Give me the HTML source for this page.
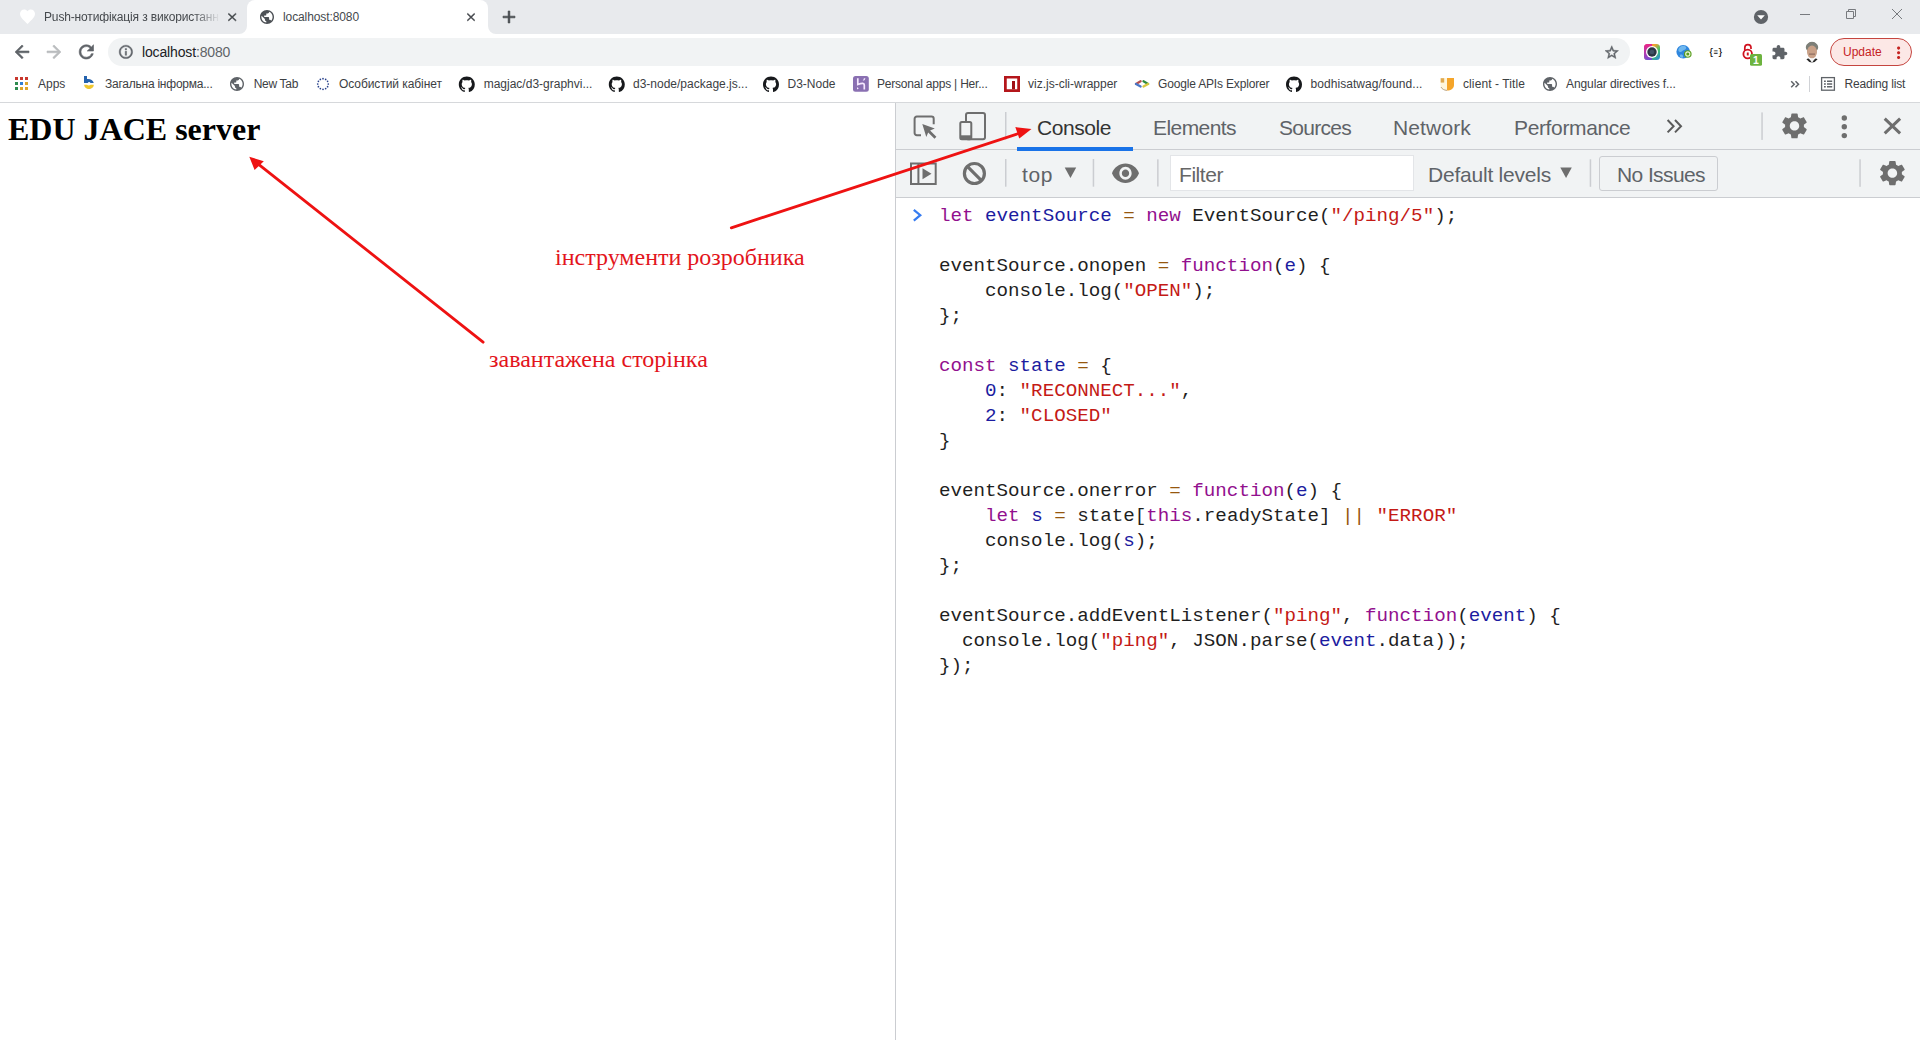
<!DOCTYPE html>
<html lang="uk">
<head>
<meta charset="utf-8">
<title>localhost:8080</title>
<style>
*{box-sizing:border-box;margin:0;padding:0}
html,body{width:1920px;height:1040px;overflow:hidden;background:#fff}
body{position:relative;font-family:"Liberation Sans",sans-serif;color:#202124}
.abs{position:absolute}
.t{position:absolute;white-space:nowrap;line-height:1}
/* ---------- browser chrome ---------- */
#tabstrip{left:0;top:0;width:1920px;height:34px;background:#e8eaed}
#activetab{left:247px;top:0;width:241px;height:34px;background:#fff;border-radius:8px 8px 0 0}
#toolbar{left:0;top:34px;width:1920px;height:36px;background:#fff}
#omni{left:108px;top:38px;width:1522px;height:28px;border-radius:14px;background:#f1f3f4}
#bookmarks{left:0;top:70px;width:1920px;height:32px;background:#fff}
#chromeborder{left:0;top:102px;width:1920px;height:1px;background:#d6d8db}
.tabtxt{font-size:12px;color:#45494d;top:11px}
.bm{font-size:12px;color:#3c4043;top:78px}
/* ---------- page ---------- */
#page{left:0;top:103px;width:895px;height:937px;background:#fff}
h1{position:absolute;left:8px;top:111px;font-family:"Liberation Serif",serif;font-weight:bold;font-size:32px;line-height:37px;color:#000;white-space:nowrap}
.note{font-family:"Liberation Serif",serif;color:#e3151c;font-size:24px}
/* ---------- devtools ---------- */
#dtborder{left:895px;top:103px;width:1px;height:937px;background:#cbcdd1}
#dttabs{left:896px;top:103px;width:1024px;height:47px;background:#f1f3f4;border-bottom:1px solid #cbcdd1}
#dtbar{left:896px;top:150px;width:1024px;height:48px;background:#f1f3f4;border-bottom:1px solid #cbcdd1}
.dtt{font-size:21px;color:#5f6368;top:117.2px}
.dtb{font-size:21px;color:#5f6368;top:164.1px}
.vdiv{width:1px;background:#cbcdd1}
#code{left:939px;top:204px;font-family:"Liberation Mono",monospace;font-size:19.2px;line-height:25px;color:#1f1f1f;white-space:pre}
.k{color:#92108e}.v{color:#1c1ca0}.s{color:#c41a16}.o{color:#96570f}
</style>
</head>
<body>
<!-- browser chrome -->
<div class="abs" id="tabstrip"></div>
<div class="abs" id="activetab"></div>
<div class="abs" id="toolbar"></div>
<div class="abs" id="omni"></div>
<div class="abs" id="bookmarks"></div>
<div class="abs" id="chromeborder"></div>

<div class="t tabtxt" id="tab1" style="left:44px;letter-spacing:-0.15px;width:176px;overflow:hidden;-webkit-mask-image:linear-gradient(90deg,#000 150px,transparent 176px)">Push-нотифікація з використанн</div>
<div class="t tabtxt" id="tab2" style="letter-spacing:-0.1px;left:283px">localhost:8080</div>
<div class="t" id="url" style="letter-spacing:-0.15px;left:142px;top:45px;font-size:14px;color:#202124">localhost<span style="color:#5f6368">:8080</span></div>

<div class="t bm" id="bApps" style="left:38px">Apps</div>
<div class="t bm" id="b1" style="letter-spacing:-0.24px;left:105px">Загальна інформа...</div>
<div class="t bm" id="b2" style="letter-spacing:-0.3px;left:253.7px">New Tab</div>
<div class="t bm" id="b3" style="letter-spacing:-0.07px;left:339px">Особистий кабінет</div>
<div class="t bm" id="b4" style="left:483.7px">magjac/d3-graphvi...</div>
<div class="t bm" id="b5" style="left:633px">d3-node/package.js...</div>
<div class="t bm" id="b6" style="left:787.5px">D3-Node</div>
<div class="t bm" id="b7" style="letter-spacing:-0.21px;left:877px">Personal apps | Her...</div>
<div class="t bm" id="b8" style="left:1028px">viz.js-cli-wrapper</div>
<div class="t bm" id="b9" style="letter-spacing:-0.17px;left:1158px">Google APIs Explorer</div>
<div class="t bm" id="b10" style="letter-spacing:0.06px;left:1310.5px">bodhisatwag/found...</div>
<div class="t bm" id="b11" style="letter-spacing:0.1px;left:1463px">client - Title</div>
<div class="t bm" id="b12" style="letter-spacing:-0.1px;left:1566px">Angular directives f...</div>
<div class="t bm" id="b13" style="letter-spacing:-0.17px;left:1844.6px">Reading list</div>
<div class="abs" id="pill" style="left:1830px;top:38px;width:82px;height:28px;border-radius:14px;background:#fce8e6;border:1px solid #c5453f"></div>
<div class="t" id="upd" style="left:1843px;top:46px;font-size:12px;color:#c5221f">Update</div>

<!-- page -->
<div class="abs" id="page"></div>
<h1 id="h1">EDU JACE server</h1>
<div class="t note" id="note1" style="left:555px;top:245px">інструменти розробника</div>
<div class="t note" id="note2" style="left:489px;top:347px">завантажена сторінка</div>

<!-- devtools -->
<div class="abs" id="dtborder"></div>
<div class="abs" id="dttabs"></div>
<div class="abs" id="dtbar"></div>
<div class="t dtt" id="tConsole" style="letter-spacing:-0.43px;left:1037px;color:#333">Console</div>
<div class="t dtt" id="tElements" style="letter-spacing:-0.56px;left:1153px">Elements</div>
<div class="t dtt" id="tSources" style="letter-spacing:-0.7px;left:1279px">Sources</div>
<div class="t dtt" id="tNetwork" style="letter-spacing:0.14px;left:1393px">Network</div>
<div class="t dtt" id="tPerformance" style="letter-spacing:-0.36px;left:1514px">Performance</div>
<div class="abs" id="underline" style="left:1017px;top:147.3px;width:116px;height:3.5px;background:#1a73e8"></div>
<div class="t dtb" id="tTop" style="letter-spacing:0.6px;left:1022px">top</div>
<div class="abs" id="filter" style="left:1169.500px;top:154.600px;width:244px;height:36.500px;background:#fff;border:1.500px solid #e3e5e8"></div>
<div class="t dtb" id="tFilter" style="letter-spacing:-0.45px;left:1179px;color:#666">Filter</div>
<div class="t dtb" id="tLevels" style="letter-spacing:-0.22px;left:1428px">Default levels</div>
<div class="abs" id="issues" style="left:1599px;top:156px;width:119px;height:35px;border:1px solid #cbcdd1;border-radius:3px"></div>
<div class="t dtb" id="tIssues" style="letter-spacing:-0.6px;left:1617px">No Issues</div>

<pre class="abs" id="code"><span class="k">let</span> <span class="v">eventSource</span> <span class="o">=</span> <span class="k">new</span> EventSource(<span class="s">"/ping/5"</span>);

eventSource.onopen <span class="o">=</span> <span class="k">function</span>(<span class="v">e</span>) {
    console.log(<span class="s">"OPEN"</span>);
};

<span class="k">const</span> <span class="v">state</span> <span class="o">=</span> {
    <span class="v">0</span>: <span class="s">"RECONNECT..."</span>,
    <span class="v">2</span>: <span class="s">"CLOSED"</span>
}

eventSource.onerror <span class="o">=</span> <span class="k">function</span>(<span class="v">e</span>) {
    <span class="k">let</span> <span class="v">s</span> <span class="o">=</span> state[<span class="k">this</span>.readyState] <span class="o">||</span> <span class="s">"ERROR"</span>
    console.log(<span class="v">s</span>);
};

eventSource.addEventListener(<span class="s">"ping"</span>, <span class="k">function</span>(<span class="v">event</span>) {
  console.log(<span class="s">"ping"</span>, JSON.parse(<span class="v">event</span>.data));
});</pre>

<!-- overlay svg for icons and arrows -->
<svg class="abs" id="ov" style="left:0;top:0" width="1920" height="1040" viewBox="0 0 1920 1040">
<path transform="translate(18.50 7.13) scale(0.7500 0.7902)" fill="#ffffff" d="M12 21.35l-1.45-1.32C5.4 15.36 2 12.28 2 8.5 2 5.42 4.42 3 7.5 3c1.740 0 3.410.81 4.500 2.090C13.090 3.810 14.760 3 16.500 3 19.580 3 22 5.420 22 8.500c0 3.780-3.400 6.860-8.550 11.540L12 21.350z"/>
<path transform="translate(225.04 10.55) scale(0.5929 0.5500)" fill="#45494d" stroke="#45494d" stroke-width="0.7" d="M19 6.41L17.59 5 12 10.59 6.41 5 5 6.41 10.59 12 5 17.59 6.41 19 12 13.41 17.59 19 19 17.59 13.41 12z"/>
<path d="M239 34 A8 8 0 0 0 247 26 V34 Z" fill="#fff"/><path d="M496 34 A8 8 0 0 1 488 26 V34 Z" fill="#fff"/>
<path transform="translate(258.60 8.60) scale(0.7000 0.7000)" fill="#4d5156" d="M12 2C6.48 2 2 6.48 2 12s4.48 10 10 10 10-4.48 10-10S17.52 2 12 2zm-1 17.93c-3.95-.49-7-3.85-7-7.93 0-.62.08-1.21.21-1.79L9 15v1c0 1.1.9 2 2 2v1.93zm6.9-2.54c-.26-.81-1-1.39-1.9-1.39h-1v-3c0-.55-.45-1-1-1H8v-2h2c.55 0 1-.45 1-1V7h2c1.1 0 2-.9 2-2v-.41c2.93 1.19 5 4.06 5 7.41 0 2.08-.8 3.97-2.1 5.39z"/>
<path transform="translate(464.14 10.55) scale(0.5714 0.5500)" fill="#45494d" stroke="#45494d" stroke-width="0.7" d="M19 6.41L17.59 5 12 10.59 6.41 5 5 6.41 10.59 12 5 17.59 6.41 19 12 13.41 17.59 19 19 17.59 13.41 12z"/>
<path transform="translate(498.71 6.71) scale(0.8571 0.8571)" fill="#45494d" stroke="#45494d" stroke-width="0.7" d="M19 13h-6v6h-2v-6H5v-2h6V5h2v6h6v2z"/>
<circle cx="1761" cy="17" r="7.1" fill="#5f6368"/><path d="M1757.2 15.2 h7.6 l-3.8 4.2z" fill="#fff"/>
<path d="M1800 14.5h10" stroke="#777a7e" stroke-width="1" fill="none"/>
<path d="M1846.5 11.5h7v7h-7z M1848.500 11.500v-2h7v7h-2" stroke="#777a7e" stroke-width="1" fill="none"/>
<path d="M1892 9l10 10M1902 9l-10 10" stroke="#777a7e" stroke-width="1" fill="none"/>
<path transform="translate(11.50 41.55) scale(0.8750 0.8625)" fill="#5f6368" stroke="#5f6368" stroke-width="0.7" d="M20 11H7.83l5.59-5.59L12 4l-8 8 8 8 1.41-1.41L7.83 13H20v-2z"/>
<path transform="translate(43.50 41.55) scale(0.8750 0.8625)" fill="#babcbe" stroke="#babcbe" stroke-width="0.7" d="M12 4l-1.41 1.41L16.17 11H4v2h12.17l-5.58 5.59L12 20l8-8z"/>
<path transform="translate(75.62 41.25) scale(0.8937 0.8875)" fill="#5f6368" stroke="#5f6368" stroke-width="0.7" d="M17.65 6.35C16.2 4.9 14.21 4 12 4c-4.42 0-7.99 3.58-7.99 8s3.57 8 7.99 8c3.73 0 6.84-2.55 7.73-6h-2.08c-.82 2.33-3.04 4-5.65 4-3.31 0-6-2.69-6-6s2.69-6 6-6c1.66 0 3.14.69 4.22 1.78L13 11h7V4l-2.35 2.35z"/>
<path transform="translate(117.86 43.86) scale(0.6700 0.6700)" fill="#5f6368" stroke="#5f6368" stroke-width="0.7" d="M11 17h2v-6h-2v6zm1-15C6.48 2 2 6.48 2 12s4.48 10 10 10 10-4.48 10-10S17.52 2 12 2zm0 18c-4.41 0-8-3.59-8-8s3.59-8 8-8 8 3.59 8 8-3.59 8-8 8zM11 9h2V7h-2v2z"/>
<path transform="translate(1603.65 44.34) scale(0.6750 0.6789)" fill="#5f6368" stroke="#5f6368" stroke-width="0.7" d="M22 9.24l-7.19-.62L12 2 9.19 8.63 2 9.24l5.46 4.73L5.82 21 12 17.27 18.18 21l-1.63-7.03L22 9.24zM12 15.4l-3.76 2.27 1-4.28-3.32-2.88 4.38-.38L12 6.1l1.71 4.04 4.38.38-3.32 2.88 1 4.28L12 15.4z"/>
<path transform="translate(1771.09 44.32) scale(0.7048 0.6762)" fill="#5f6368" d="M20.5 11H19V7c0-1.1-.9-2-2-2h-4V3.5C13 2.12 11.88 1 10.5 1S8 2.12 8 3.5V5H4c-1.1 0-1.99.9-1.99 2v3.8H3.5c1.49 0 2.7 1.21 2.7 2.7s-1.21 2.7-2.7 2.7H2V20c0 1.1.9 2 2 2h3.8v-1.5c0-1.49 1.21-2.7 2.7-2.7 1.49 0 2.7 1.21 2.7 2.7V22H17c1.1 0 2-.9 2-2v-4h1.5c1.38 0 2.5-1.12 2.5-2.5S21.880 11 20.5 11z"/>
<path transform="translate(1889.00 43.38) scale(0.8000 0.7812)" fill="#c5221f" d="M12 8c1.1 0 2-.9 2-2s-.9-2-2-2-2 .9-2 2 .9 2 2 2zm0 2c-1.1 0-2 .9-2 2s.9 2 2 2 2-.9 2-2-.9-2-2-2zm0 6c-1.1 0-2 .9-2 2s.9 2 2 2 2-.9 2-2-.9-2-2-2z"/>
<defs><linearGradient id="rb" x1="0" y1="0" x2="1" y2="1"><stop offset="0" stop-color="#f0387c"/><stop offset=".35" stop-color="#f7a22b"/><stop offset=".65" stop-color="#3fc46a"/><stop offset="1" stop-color="#2f7df0"/></linearGradient>
<linearGradient id="rb2" x1="0" y1="0" x2="0" y2="1"><stop offset="0" stop-color="#e91e8c" stop-opacity=".9"/><stop offset="1" stop-color="#7a3fe0" stop-opacity=".9"/></linearGradient>
<clipPath id="avc"><ellipse cx="1812" cy="52" rx="7.5" ry="10.5"/></clipPath></defs>
<rect x="1644" y="44" width="16" height="16" rx="3.5" fill="url(#rb)"/><path d="M1647.500 44h4.500v16h-4.500a3.500 3.500 0 0 1-3.500-3.500v-9a3.500 3.500 0 0 1 3.500-3.500z" fill="url(#rb2)"/><circle cx="1652" cy="52" r="6" fill="#fff"/><circle cx="1652" cy="52" r="4.700" fill="#2b3644"/><circle cx="1652" cy="52" r="2.300" fill="#3f5266"/>
<circle cx="1683.2" cy="51.7" r="6.800" fill="#2e86de"/><path d="M1679 48c2-2.500 5-2.800 6.500-1.500s.5 3-1.500 3.500-2 2.500-4 2-2-2.500-1-4z" fill="#6fb7ee"/><path d="M1680 55c1-.8 2.500-.5 3 .8s-.5 2.200-1.500 2-2.200-1.800-1.500-2.800z" fill="#6fb7ee"/><circle cx="1687.800" cy="54" r="3.800" fill="#5a9e1e"/><circle cx="1687.800" cy="54" r="2.100" fill="none" stroke="#e9f5d8" stroke-width="1.100"/>
<text x="1715.700" y="55.300" font-family="Liberation Mono,monospace" font-weight="bold" font-size="9" text-anchor="middle" fill="#111" textLength="13.500" lengthAdjust="spacingAndGlyphs">{≡}</text>
<path d="M1744.800 50v-2.200a3.100 3.100 0 0 1 6.200 0v1.200" fill="none" stroke="#d0121f" stroke-width="1.700"/><circle cx="1747.700" cy="54" r="4.300" fill="none" stroke="#d0121f" stroke-width="1.800"/><rect x="1746.800" y="52.500" width="1.900" height="3" fill="#d0121f"/>
<rect x="1750" y="54" width="12" height="11.700" rx="1.500" fill="#6db33f"/><text x="1756" y="63.700" font-size="10.500" font-weight="bold" text-anchor="middle" fill="#fff" font-family="Liberation Sans,sans-serif">1</text>
<g clip-path="url(#avc)"><rect x="1804" y="41" width="16" height="22" fill="#fff"/><ellipse cx="1812" cy="47" rx="6.300" ry="5.500" fill="#7d7f78"/><ellipse cx="1812" cy="52" rx="5" ry="6.500" fill="#c9a188"/><path d="M1809 53.500h6v1.200h-6z" fill="#8f6f60"/><path d="M1804.500 63c0-3.500 3-4.500 4-4.500l3.500 3 3.500-3c1 0 4 1 4 4.500z" fill="#2a2a2a"/><path d="M1809.500 58.500l2.500 4.500 2.500-4.500z" fill="#f4f4f4"/></g>
<rect x="15" y="77" width="3" height="3" fill="#c8372d"/>
<rect x="20" y="77" width="3" height="3" fill="#c8372d"/>
<rect x="25" y="77" width="3" height="3" fill="#c8372d"/>
<rect x="15" y="82" width="3" height="3" fill="#2e8b4f"/>
<rect x="20" y="82" width="3" height="3" fill="#2f7fd6"/>
<rect x="25" y="82" width="3" height="3" fill="#dca52c"/>
<rect x="15" y="87" width="3" height="3" fill="#2e8b4f"/>
<rect x="20" y="87" width="3" height="3" fill="#dca52c"/>
<rect x="25" y="87" width="3" height="3" fill="#dca52c"/>
<path d="M84 76h3v3c3-.5 6 1 6.800 4h-3.300c-.5-1.200-2.300-1.200-2.800 0H84z" fill="#2563ae"/><path d="M84.200 84.800h2.800c.8 1 2.800 1 3.600 0h3.200c0 2.500-2.300 4.200-4.800 4.200s-4.800-1.700-4.800-4.200z" fill="#efc72f"/>
<path transform="translate(228.60 75.60) scale(0.7000 0.7000)" fill="#5f6368" d="M12 2C6.48 2 2 6.48 2 12s4.48 10 10 10 10-4.48 10-10S17.52 2 12 2zm-1 17.93c-3.95-.49-7-3.85-7-7.93 0-.62.08-1.21.21-1.79L9 15v1c0 1.1.9 2 2 2v1.93zm6.9-2.54c-.26-.81-1-1.39-1.9-1.39h-1v-3c0-.55-.45-1-1-1H8v-2h2c.55 0 1-.45 1-1V7h2c1.1 0 2-.9 2-2v-.41c2.93 1.19 5 4.06 5 7.41 0 2.08-.8 3.97-2.1 5.39z"/>
<circle cx="328.30" cy="84.00" r="0.85" fill="#27408b"/>
<circle cx="327.59" cy="86.65" r="0.85" fill="#27408b"/>
<circle cx="325.65" cy="88.59" r="0.85" fill="#27408b"/>
<circle cx="323.00" cy="89.30" r="0.85" fill="#27408b"/>
<circle cx="320.35" cy="88.59" r="0.85" fill="#27408b"/>
<circle cx="318.41" cy="86.65" r="0.85" fill="#27408b"/>
<circle cx="317.70" cy="84.00" r="0.85" fill="#27408b"/>
<circle cx="318.41" cy="81.35" r="0.85" fill="#27408b"/>
<circle cx="320.35" cy="79.41" r="0.85" fill="#27408b"/>
<circle cx="323.00" cy="78.70" r="0.85" fill="#27408b"/>
<circle cx="325.65" cy="79.41" r="0.85" fill="#27408b"/>
<circle cx="327.59" cy="81.35" r="0.85" fill="#27408b"/>
<path transform="translate(458.80 76.50) scale(1.0000 0.9936)" fill="#17191c" d="M8 0C3.58 0 0 3.58 0 8c0 3.540 2.290 6.530 5.470 7.590.4.070.55-.17.55-.38 0-.19-.01-.82-.01-1.490-2.010.37-2.530-.49-2.690-.94-.09-.23-.48-.94-.82-1.130-.28-.15-.68-.52-.01-.53.63-.01 1.080.58 1.230.82.72 1.210 1.870.87 2.330.66.070-.52.28-.87.51-1.070-1.780-.2-3.640-.89-3.640-3.950 0-.87.31-1.590.82-2.150-.08-.2-.36-1.020.08-2.120 0 0 .67-.21 2.200.82.64-.18 1.320-.27 2-.27.68 0 1.360.09 2 .27 1.530-1.040 2.200-.82 2.200-.82.44 1.100.16 1.920.08 2.120.51.56.82 1.270.82 2.150 0 3.070-1.870 3.750-3.650 3.950.29.25.54.73.54 1.480 0 1.070-.01 1.930-.01 2.200 0 .21.15.46.55.38A8.013 8.013 0 0016 8c0-4.420-3.580-8-8-8z"/>
<path transform="translate(608.80 76.50) scale(1.0000 0.9936)" fill="#17191c" d="M8 0C3.58 0 0 3.58 0 8c0 3.540 2.290 6.530 5.470 7.590.4.070.55-.17.55-.38 0-.19-.01-.82-.01-1.490-2.010.37-2.530-.49-2.690-.94-.09-.23-.48-.94-.82-1.130-.28-.15-.68-.52-.01-.53.63-.01 1.080.58 1.230.82.72 1.210 1.870.87 2.330.66.070-.52.28-.87.51-1.070-1.780-.2-3.640-.89-3.640-3.950 0-.87.31-1.590.82-2.150-.08-.2-.36-1.020.08-2.120 0 0 .67-.21 2.200.82.64-.18 1.320-.27 2-.27.68 0 1.360.09 2 .27 1.530-1.040 2.200-.82 2.200-.82.44 1.100.16 1.920.08 2.120.51.56.82 1.270.82 2.150 0 3.070-1.870 3.750-3.650 3.950.29.25.54.73.54 1.480 0 1.070-.01 1.930-.01 2.200 0 .21.15.46.55.38A8.013 8.013 0 0016 8c0-4.420-3.580-8-8-8z"/>
<path transform="translate(763.00 76.50) scale(1.0000 0.9936)" fill="#17191c" d="M8 0C3.58 0 0 3.58 0 8c0 3.540 2.290 6.530 5.470 7.590.4.070.55-.17.55-.38 0-.19-.01-.82-.01-1.490-2.010.37-2.530-.49-2.690-.94-.09-.23-.48-.94-.82-1.130-.28-.15-.68-.52-.01-.53.63-.01 1.080.58 1.230.82.72 1.210 1.870.87 2.330.66.070-.52.28-.87.51-1.070-1.780-.2-3.640-.89-3.640-3.950 0-.87.31-1.590.82-2.150-.08-.2-.36-1.020.08-2.120 0 0 .67-.21 2.200.82.64-.18 1.320-.27 2-.27.68 0 1.360.09 2 .27 1.530-1.040 2.200-.82 2.200-.82.44 1.100.16 1.920.08 2.120.51.56.82 1.270.82 2.150 0 3.070-1.870 3.750-3.650 3.950.29.25.54.73.54 1.480 0 1.070-.01 1.930-.01 2.200 0 .21.15.46.55.38A8.013 8.013 0 0016 8c0-4.420-3.580-8-8-8z"/>
<path transform="translate(1286.00 76.50) scale(1.0000 0.9936)" fill="#17191c" d="M8 0C3.58 0 0 3.58 0 8c0 3.540 2.290 6.530 5.470 7.590.4.070.55-.17.55-.38 0-.19-.01-.82-.01-1.490-2.010.37-2.530-.49-2.690-.94-.09-.23-.48-.94-.82-1.130-.28-.15-.68-.52-.01-.53.63-.01 1.080.58 1.230.82.72 1.210 1.870.87 2.330.66.070-.52.28-.87.51-1.070-1.780-.2-3.640-.89-3.640-3.950 0-.87.31-1.590.82-2.150-.08-.2-.36-1.020.08-2.120 0 0 .67-.21 2.200.82.64-.18 1.320-.27 2-.27.68 0 1.360.09 2 .27 1.530-1.040 2.200-.82 2.200-.82.44 1.100.16 1.920.08 2.120.51.56.82 1.270.82 2.150 0 3.070-1.870 3.750-3.650 3.950.29.25.54.73.54 1.480 0 1.070-.01 1.930-.01 2.200 0 .21.15.46.55.38A8.013 8.013 0 0016 8c0-4.420-3.580-8-8-8z"/>
<rect x="853" y="76" width="15.800" height="15.800" rx="2.500" fill="#8a70b2"/><path d="M857.800 78.200v6.300c2-.8 3.800-1.300 5-1.200 1 .1 1.500.8 1.500 1.800v4.400" stroke="#f6e8ff" stroke-width="1.700" fill="none"/><path d="M857 87.200l1.900 1.100-1.900 1.100zM862.600 80.600c.8-.8 1.200-1.600 1.300-2.400h1.500c-.1 1-.6 1.800-1.300 2.400z" fill="#f6e8ff"/>
<rect x="1004" y="76" width="16" height="16" fill="#b4161b"/><rect x="1006.750" y="78.500" width="10.500" height="10.750" fill="#fff"/><rect x="1012" y="81" width="3" height="8.250" fill="#a01015"/>
<g fill="none" stroke-width="2.300" stroke-linecap="round"><path d="M1140.600 81.300L1136 83.900" stroke="#b8504c"/><path d="M1136 83.900L1140.600 86.500" stroke="#4a76c6"/><path d="M1143.500 81.300L1148.100 83.900" stroke="#2f8a3f"/><path d="M1148.100 83.900L1143.500 86.500" stroke="#d8c740"/></g>
<path d="M1440.500 78h6.500v12.500c-3.500 0-6.500-2-6.500-5z" fill="#fff6dc"/><path d="M1447 78h7v7c0 3.500-3 5.500-7 5.500z" fill="#f5a52a"/><rect x="1440.700" y="78.200" width="3.500" height="4.400" fill="#dfa950"/><path d="M1441 87c1 2 3 3.200 6 3.400" stroke="#b9a58a" fill="none" stroke-width="1"/>
<path transform="translate(1541.60 75.60) scale(0.7000 0.7000)" fill="#5f6368" d="M12 2C6.48 2 2 6.48 2 12s4.48 10 10 10 10-4.48 10-10S17.52 2 12 2zm-1 17.93c-3.95-.49-7-3.85-7-7.93 0-.62.08-1.21.21-1.79L9 15v1c0 1.1.9 2 2 2v1.93zm6.9-2.54c-.26-.81-1-1.39-1.9-1.39h-1v-3c0-.55-.45-1-1-1H8v-2h2c.55 0 1-.45 1-1V7h2c1.1 0 2-.9 2-2v-.41c2.93 1.19 5 4.06 5 7.41 0 2.08-.8 3.97-2.1 5.39z"/>
<path d="M1791.200 81.200l3 3-3 3M1795.500 81.200l3 3-3 3" stroke="#5f6368" stroke-width="1.500" fill="none"/>
<rect x="1809" y="76" width="1" height="16" fill="#d0d2d6"/>
<rect x="1821.600" y="77.600" width="12.800" height="12.600" fill="none" stroke="#5f6368" stroke-width="1.300"/><path d="M1824 80.500h1.800v1.500h-1.800zM1827 80.500h5.200v1.500h-5.200zM1824 83.200h1.800v1.500h-1.800zM1827 83.200h5.200v1.500h-5.200zM1824 85.900h1.800v1.500h-1.800zM1827 85.900h5.200v1.500h-5.200z" fill="#5f6368"/>
<path d="M921 135.200h-4.200a2.200 2.200 0 0 1-2.200-2.200v-14.200a2.200 2.200 0 0 1 2.200-2.200h14.700a2.200 2.200 0 0 1 2.200 2.200v5.400" fill="none" stroke="#6e6e6e" stroke-width="2"/>
<path d="M922.300 124l12.500 4.600-4.700 1.900 6.300 6.300-1.900 1.900-6.300-6.300-1.900 4.700z" fill="#6e6e6e"/>
<rect x="966" y="113" width="19" height="26.300" rx="2" fill="none" stroke="#6e6e6e" stroke-width="2"/>
<rect x="960.300" y="122" width="11" height="17.300" rx="1.500" fill="#f1f3f4" stroke="#6e6e6e" stroke-width="2"/><rect x="960.300" y="135.300" width="11" height="4" fill="#6e6e6e"/>
<rect x="1005" y="112" width="1.500" height="27.500" fill="#cbcdd1"/>
<path d="M1667.600 120l6 6.200-6 6.200M1675 120l6 6.200-6 6.200" stroke="#5a5a5a" stroke-width="2" fill="none"/>
<rect x="1761.300" y="112.400" width="1.500" height="27.500" fill="#cbcdd1"/>
<path transform="translate(1778.80 110.52) scale(1.3085 1.2812)" fill="#6e6e6e" d="M19.14 12.94c.04-.3.06-.61.06-.94 0-.32-.02-.64-.07-.94l2.03-1.58c.18-.14.23-.41.12-.61l-1.92-3.32c-.12-.22-.37-.29-.59-.22l-2.39.96c-.5-.38-1.03-.7-1.62-.94l-.36-2.54c-.04-.24-.24-.41-.48-.41h-3.84c-.24 0-.43.17-.47.41l-.36 2.54c-.59.24-1.13.57-1.62.94l-2.39-.96c-.22-.08-.47 0-.59.22L2.74 8.87c-.12.21-.08.47.12.61l2.03 1.58c-.05.3-.09.63-.09.94s.02.64.07.94l-2.03 1.58c-.18.14-.23.41-.12.61l1.92 3.32c.12.22.37.29.59.22l2.39-.96c.5.38 1.03.7 1.62.94l.36 2.54c.05.24.24.41.48.41h3.84c.24 0 .44-.17.47-.41l.36-2.54c.59-.24 1.13-.56 1.62-.94l2.39.96c.22.08.47 0 .59-.22l1.92-3.32c.12-.22.07-.47-.12-.61l-2.01-1.58zM12 15.6c-1.98 0-3.6-1.62-3.6-3.6s1.62-3.6 3.6-3.6 3.6 1.62 3.6 3.6-1.62 3.6-3.6 3.6z"/>
<circle cx="1844.300" cy="118" r="2.700" fill="#6e6e6e"/>
<circle cx="1844.300" cy="126.8" r="2.700" fill="#6e6e6e"/>
<circle cx="1844.300" cy="135.6" r="2.700" fill="#6e6e6e"/>
<path d="M1884.700 118.600l15.400 14.800M1900.100 118.600l-15.400 14.800" stroke="#6e6e6e" stroke-width="3" fill="none"/>
<rect x="911" y="163.500" width="24.700" height="20.500" fill="none" stroke="#6e6e6e" stroke-width="2"/><path d="M918.400 163.500v20.500" stroke="#6e6e6e" stroke-width="2"/><path d="M922.500 168.200l9 5.500-9 5.500z" fill="#6e6e6e"/>
<circle cx="974.400" cy="173.500" r="10" fill="none" stroke="#6e6e6e" stroke-width="3.200"/><path d="M967.300 166.400l14.200 14.200" stroke="#6e6e6e" stroke-width="3.200"/>
<rect x="1005" y="159" width="1.500" height="27.700" fill="#cbcdd1"/>
<path d="M1064.700 167.400h11.500l-5.750 10.500z" fill="#6e6e6e"/>
<rect x="1092.700" y="159" width="1.500" height="27.700" fill="#cbcdd1"/>
<rect x="1157.100" y="159.300" width="1.500" height="27.200" fill="#cbcdd1"/>
<path transform="translate(1110.77 157.81) scale(1.2273 1.2867)" fill="#6e6e6e" d="M12 4.5C7 4.5 2.73 7.61 1 12c1.73 4.39 6 7.5 11 7.500s9.270-3.110 11-7.500c-1.730-4.390-6-7.500-11-7.500zM12 17c-2.760 0-5-2.240-5-5s2.240-5 5-5 5 2.240 5 5-2.240 5-5 5zm0-8c-1.660 0-3 1.340-3 3s1.340 3 3 3 3-1.340 3-3-1.340-3-3-3z"/>
<path d="M1560.300 167.400h11.500l-5.750 10.500z" fill="#6e6e6e"/>
<rect x="1589.700" y="159.300" width="1.500" height="27.500" fill="#cbcdd1"/>
<rect x="1859.300" y="159.300" width="1.500" height="27.500" fill="#cbcdd1"/>
<path transform="translate(1876.57 157.96) scale(1.3191 1.2656)" fill="#6e6e6e" d="M19.14 12.94c.04-.3.06-.61.06-.94 0-.32-.02-.64-.07-.94l2.03-1.58c.18-.14.23-.41.12-.61l-1.92-3.32c-.12-.22-.37-.29-.59-.22l-2.39.96c-.5-.38-1.03-.7-1.62-.94l-.36-2.54c-.04-.24-.24-.41-.48-.41h-3.84c-.24 0-.43.17-.47.41l-.36 2.54c-.59.24-1.13.57-1.62.94l-2.39-.96c-.22-.08-.47 0-.59.22L2.74 8.87c-.12.21-.08.47.12.61l2.03 1.58c-.05.3-.09.63-.09.94s.02.64.07.94l-2.03 1.58c-.18.14-.23.41-.12.61l1.92 3.32c.12.22.37.29.59.22l2.39-.96c.5.38 1.03.7 1.62.94l.36 2.54c.05.24.24.41.48.41h3.84c.24 0 .44-.17.47-.41l.36-2.54c.59-.24 1.13-.56 1.62-.94l2.39.96c.22.08.47 0 .59-.22l1.92-3.32c.12-.22.07-.47-.12-.61l-2.01-1.58zM12 15.6c-1.98 0-3.6-1.62-3.6-3.6s1.62-3.6 3.6-3.6 3.6 1.62 3.6 3.6-1.62 3.6-3.6 3.6z"/>
<path d="M913.800 209.800l6.500 5.400-6.500 5.400" stroke="#367cf1" stroke-width="2.200" fill="none"/>
<path d="M483.100 342.200L258 163.800" stroke="#ee1212" stroke-width="2.800" stroke-linecap="round" fill="none"/><path d="M249.300 156.800L263.800 161.200 254.600 170z" fill="#ee1212"/>
<path d="M731.300 227.800L1020 133" stroke="#ee1212" stroke-width="2.800" stroke-linecap="round" fill="none"/><path d="M1031.500 129.100L1015.300 127.100 1019.300 138.600z" fill="#ee1212"/>

</svg>
</body>
</html>
